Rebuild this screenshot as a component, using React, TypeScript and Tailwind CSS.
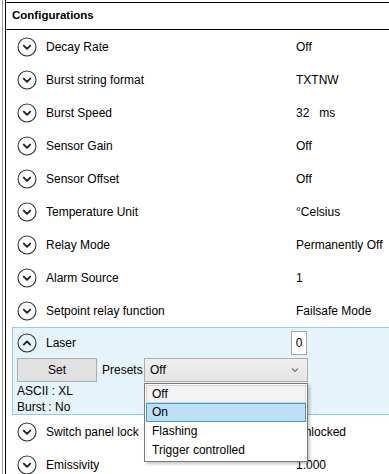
const font = { fontFamily: '"Liberation Sans", Arial, sans-serif' };

type Row = { label: string; value: string };

const topRows: Row[] = [
  { label: "Decay Rate", value: "Off" },
  { label: "Burst string format", value: "TXTNW" },
  { label: "Burst Speed", value: "32\u00a0\u00a0\u00a0ms" },
  { label: "Sensor Gain", value: "Off" },
  { label: "Sensor Offset", value: "Off" },
  { label: "Temperature Unit", value: "°Celsius" },
  { label: "Relay Mode", value: "Permanently Off" },
  { label: "Alarm Source", value: "1" },
  { label: "Setpoint relay function", value: "Failsafe Mode" },
];

const bottomRows: Row[] = [
  { label: "Switch panel lock", value: "Unlocked" },
  { label: "Emissivity", value: "1.000" },
];

function ToggleIcon({ up = false }: { up?: boolean }) {
  return (
    <svg width="20" height="20" viewBox="0 0 20 20" className="flex-none">
      <circle cx="10" cy="10" r="9" fill="none" stroke="#333" strokeWidth="1.1" />
      <path
        d={up ? "M6.8 11.6 L10 8.4 L13.2 11.6" : "M6.8 8.6 L10 11.8 L13.2 8.6"}
        fill="none"
        stroke="#222"
        strokeWidth="1.9"
        strokeLinecap="round"
        strokeLinejoin="round"
      />
    </svg>
  );
}

function SettingRow({ row }: { row: Row }) {
  return (
    <div className="flex items-center h-[33px] pl-[11px]">
      <ToggleIcon />
      <div className="w-[259px] flex-none pl-[9px] whitespace-nowrap">{row.label}</div>
      <div className="whitespace-nowrap">{row.value}</div>
    </div>
  );
}

const presets = ["Off", "On", "Flashing", "Trigger controlled"];

function PresetDropdown() {
  return (
    <div className="absolute left-0 top-[25px] w-[164px] bg-white border border-[#7a7a7a] p-px shadow-[2px_2px_3px_rgba(0,0,0,0.22)] z-10">
      {presets.map((p) => (
        <div
          key={p}
          className={
            p === "On"
              ? "h-[19px] flex items-center pl-[5px] bg-[#bcdff1] border border-[#3a9bd5]"
              : p === "Off"
              ? "h-[18px] flex items-center pl-[5px] bg-[#f3f3f3] border border-[#d4d4d4]"
              : "h-[19px] flex items-center pl-[6px]"
          }
        >
          {p}
        </div>
      ))}
    </div>
  );
}

function LaserPanel() {
  return (
    <div className="ml-[6px] bg-[#e5f3fb] border-y border-l border-[#8fcbed] pl-[4px] h-[88px]">
      <div className="flex items-center h-[29px]">
        <ToggleIcon up />
        <div className="w-[254px] flex-none pl-[9px]">Laser</div>
        <div className="w-[16px] h-[24px] bg-white border border-[#a8a8a8] flex items-center justify-center">0</div>
      </div>
      <div className="flex items-center h-[25px]">
        <button className="w-[80px] h-[24px] bg-[#e1e1e1] border border-[#adadad] text-center">Set</button>
        <span className="w-[47px] pl-[5px] whitespace-nowrap">Presets</span>
        <div className="relative">
          <div className="w-[164px] h-[24px] border border-[#acacac] bg-gradient-to-b from-[#efefef] to-[#e5e5e5] flex items-center pl-[5px] pr-[8px]">
            <span className="flex-1">Off</span>
            <svg width="8" height="6" viewBox="0 0 8 6">
              <path d="M1 1.5 L4 4.5 L7 1.5" fill="none" stroke="#777" strokeWidth="1.1" />
            </svg>
          </div>
          <PresetDropdown />
        </div>
      </div>
      <div className="leading-[16px] pt-[1px]">
        <div>ASCII : XL</div>
        <div>Burst : No</div>
      </div>
    </div>
  );
}

export default function App() {
  return (
    <div className="w-[389px] h-[474px] overflow-hidden bg-white text-[12px] text-black" style={font}>
      <div className="ml-[2px] h-full border-l border-[#9a9a9a] pl-[2px]">
        <div className="h-full border-l border-black pt-[2px]">
          <div className="h-[28px] border-y border-black flex items-center pl-[6px] font-bold text-[11.5px]">
            Configurations
          </div>
          {topRows.map((r) => (
            <SettingRow key={r.label} row={r} />
          ))}
          <LaserPanel />
          {bottomRows.map((r) => (
            <SettingRow key={r.label} row={r} />
          ))}
        </div>
      </div>
    </div>
  );
}
